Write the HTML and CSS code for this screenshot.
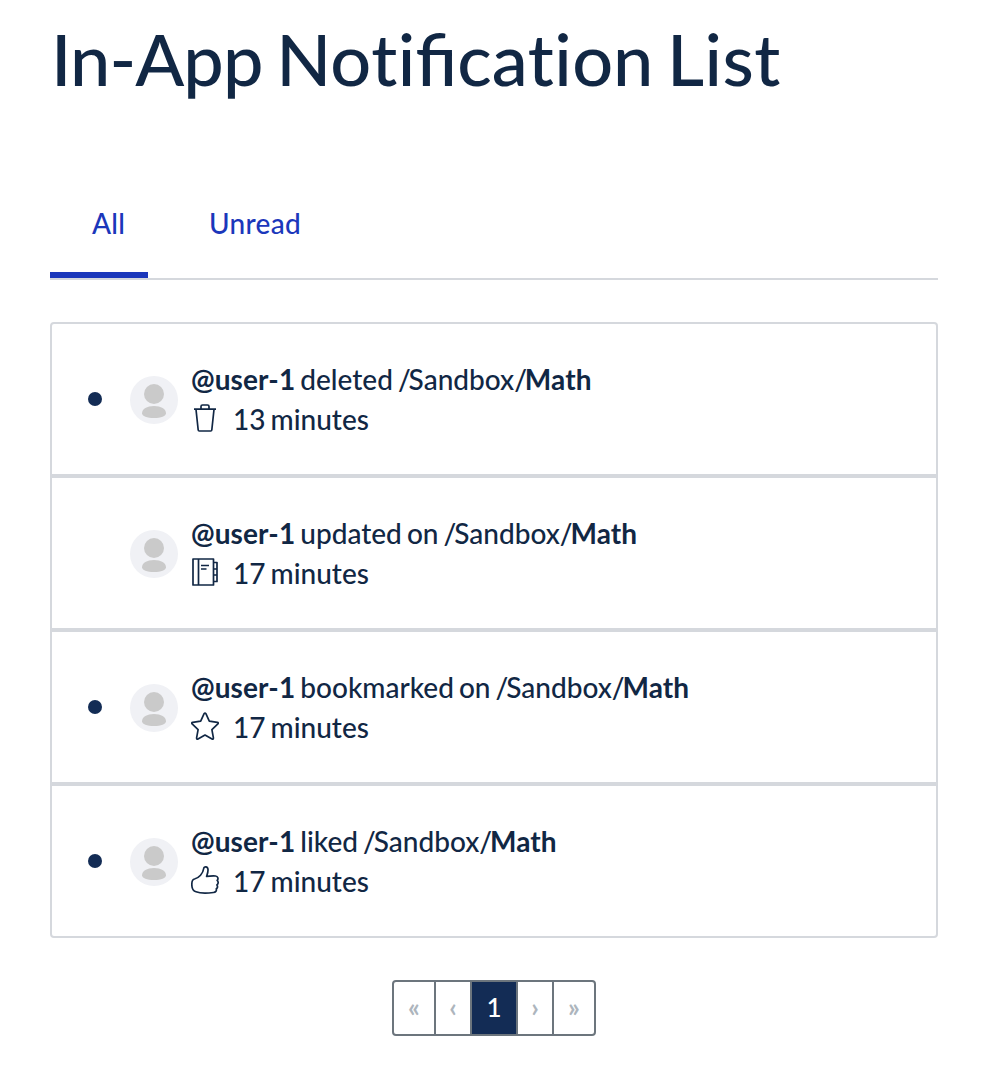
FILE: index.html
```html
<!DOCTYPE html>
<html lang="en">
<head>
<meta charset="utf-8">
<title>In-App Notification List</title>
<link rel="stylesheet" href="styles.css">
</head>
<body>
<svg class="defs" width="0" height="0" aria-hidden="true">
  <symbol id="avatar" viewBox="0 0 48 48">
    <circle cx="24" cy="24" r="24" fill="#f0f1f5"/>
    <circle cx="24" cy="18" r="10" fill="#cacaca"/>
    <path d="M12 37.200C12 33 17 30 24 30s12 3 12 7.200C36 40 31 42 24 42s-12-2-12-4.800z" fill="#cacaca"/>
  </symbol>
</svg>
<main class="page">
  <h1 class="title"><span class="tight">In-App</span> No<span class="plain">ti</span>fica<span class="plain">ti</span>on <span class="loose">List</span></h1>
  <nav class="tabs">
    <a class="tab tab-active">All</a>
    <a class="tab">Unread</a>
  </nav>
  <ul class="list">
    <li class="item">
      <span class="dot"></span>
      <svg class="avatar"><use href="#avatar"/></svg>
      <div class="body">
        <div class="message"><b class="user">@user-1</b> deleted <span class="slash">/</span>Sandbox<span class="slash">/</span><b class="user">Math</b></div>
        <div class="meta">
          <svg class="icon" viewBox="0 0 28 28"><path d="M3 5.200H25M10 5V2.500Q10 1 11.500 1H16.500Q18 1 18 2.500V5M5 5.500L7.200 26Q7.300 27 8.300 27H19.700Q20.700 27 20.800 26L23 5.500"/></svg>
          <span>13 minutes</span>
        </div>
      </div>
    </li>
    <li class="item">
      <span class="dot dot-read"></span>
      <svg class="avatar"><use href="#avatar"/></svg>
      <div class="body">
        <div class="message"><b class="user">@user-1</b> updated on <span class="slash">/</span>Sandbox<span class="slash">/</span><b class="user">Math</b></div>
        <div class="meta">
          <svg class="icon" viewBox="0 0 28 28"><path d="M2 1H22.500V27H2zM7.500 1V27M10 7.500H18M10 11H15.500M22.500 4.500H26V23.500H22.500M22.500 11H26M22.500 17H26"/></svg>
          <span>17 minutes</span>
        </div>
      </div>
    </li>
    <li class="item">
      <span class="dot"></span>
      <svg class="avatar"><use href="#avatar"/></svg>
      <div class="body">
        <div class="message"><b class="user">@user-1</b> bookmarked on <span class="slash">/</span>Sandbox<span class="slash">/</span><b class="user">Math</b></div>
        <div class="meta">
          <svg class="icon" viewBox="0 0 28 28"><path d="M13.100 1.700Q14 .3 14.900 1.700L18.300 9.200L26.300 10.300Q28 10.700 26.900 11.900L20.900 17.600L22.400 25.900Q22.500 27.600 21 26.900L14 23L7 26.900Q5.500 27.600 5.600 25.900L7.100 17.600L1.100 11.900Q0 10.700 1.700 10.300L9.700 9.200Z"/></svg>
          <span>17 minutes</span>
        </div>
      </div>
    </li>
    <li class="item">
      <span class="dot"></span>
      <svg class="avatar"><use href="#avatar"/></svg>
      <div class="body">
        <div class="message"><b class="user">@user-1</b> liked <span class="slash">/</span>Sandbox<span class="slash">/</span><b class="user">Math</b></div>
        <div class="meta">
          <svg class="icon" viewBox="0 0 28 28"><path d="M3.500 13C8 12 12 7.500 12.700 2.500C13 .2 16.700 .3 17 3.500C17.200 6 16.200 8.500 15.600 10.400C19 10 22 9.800 24.500 10C27 10.300 27.600 12.900 26.200 14.400C27.700 15.900 27.300 18 25.900 18.900C27 20.500 26.500 22.200 25.300 22.800C25.800 25 24.500 26.300 22.500 26.500C16 27.300 9 27.300 5 25.800C1.800 25 .8 22 .8 18.500C.8 15.500 1.200 13.300 3.500 13Z"/></svg>
          <span>17 minutes</span>
        </div>
      </div>
    </li>
  </ul>
  <nav class="pager">
    <span class="page-link edge">«</span>
    <span class="page-link step">‹</span>
    <span class="page-link current">1</span>
    <span class="page-link step">›</span>
    <span class="page-link edge">»</span>
  </nav>
</main>
</body>
</html>
```
FILE: styles.css
```css
* { box-sizing: border-box; }
body {
  margin: 0;
  background: #fff;
  color: #112744;
  font: 500 28px/40px Lato, sans-serif;
}
.defs { position: absolute; }
.page { padding: 14px 50px 0; }
.title {
  margin: 0;
  padding-left: 1px;
  font-size: 72px;
  line-height: 88px;
  font-weight: 500;
  word-spacing: -4.5px;
}
.tight { letter-spacing: -0.9px; }
.plain {
  font-variant-ligatures: none;
  letter-spacing: 0.4px;
}
.loose { letter-spacing: 0.4px; }
.tabs {
  display: flex;
  margin-top: 70px;
  height: 108px;
  gap: 20px;
  border-bottom: 2px solid #d5d8dd;
}
.tab {
  height: 106px;
  padding: 31px 22px 0 41px;
  color: #1b37bb;
  letter-spacing: 0.3px;
}
.tab-active {
  width: 98px;
  padding-left: 42px;
  border-bottom: 6px solid #1b37bb;
}
.list {
  list-style: none;
  margin: 42px 0 0;
  padding: 0;
}
.item {
  display: flex;
  align-items: center;
  height: 154px;
  padding-left: 36px;
  border: 2px solid #d5d8dd;
}
.item:first-child { border-radius: 4px 4px 0 0; }
.item:last-child { border-radius: 0 0 4px 4px; }
.dot {
  width: 14px;
  height: 14px;
  border-radius: 50%;
  background: #132c55;
}
.dot-read { visibility: hidden; }
.avatar {
  width: 48px;
  height: 48px;
  margin: 2px 13px 0 28px;
}
.body {
  white-space: nowrap;
  word-spacing: -2px;
}
.user { letter-spacing: 0.1px; }
.slash { letter-spacing: -2.1px; }
.meta {
  display: flex;
  gap: 14px;
}
.icon {
  width: 28px;
  height: 28px;
  margin-top: 5px;
  fill: none;
  stroke: #112744;
  stroke-width: 1.7;
  stroke-linejoin: round;
}
.pager {
  display: flex;
  width: 204px;
  height: 56px;
  margin: 42px auto 0;
  border: 2px solid #6c757d;
  border-radius: 4px;
  font-size: 26px;
  line-height: 50px;
  text-align: center;
  color: #adb5bd;
}
.page-link + .page-link { border-left: 2px solid #6c757d; }
.edge {
  width: 40px;
  font-weight: 700;
}
.edge:last-child { flex: 1; }
.step {
  width: 36px;
  font-weight: 700;
}
.page-link.current {
  width: 46px;
  background: #132c55;
  color: #fff;
}
```
